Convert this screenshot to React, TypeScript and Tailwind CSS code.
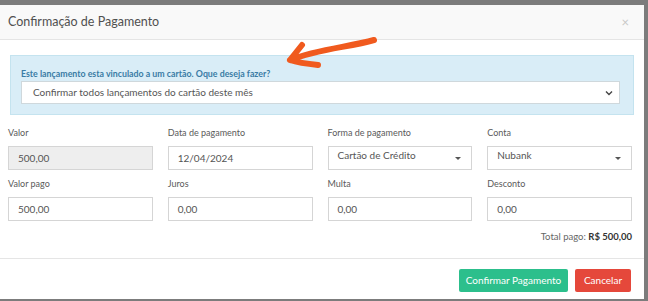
import React from "react";

const font = { fontFamily: "Lato, 'Open Sans', sans-serif" };

interface FieldProps {
  label: string;
  value: string;
  disabled?: boolean;
  select?: boolean;
}

const Field: React.FC<FieldProps> = ({ label, value, disabled, select }) => (
  <div className="flex flex-col">
    <label className="text-[9px] leading-[12px] text-[#5a5a5a] mb-[7px]">{label}</label>
    <div
      className={`h-[24px] border border-[#d5d5d5] flex items-center pl-[9px] pr-[10px] text-[10px] text-[#555] ${
        disabled ? "bg-[#eeeeee]" : "bg-white"
      }`}
    >
      <span className={`flex-1 ${select ? "-mt-[5px]" : ""}`}>{value}</span>
      {select && (
        <span className="w-0 h-0 border-l-[3px] border-r-[3px] border-t-[3px] border-l-transparent border-r-transparent border-t-[#555]" />
      )}
    </div>
  </div>
);

export default function App() {
  return (
    <div className="w-[648px] h-[301px] bg-[#7c7c7c] pt-[5px] pr-[4px] pb-[2px] relative overflow-hidden" style={font}>
      <div className="bg-white h-full flex flex-col">
        <div className="h-[35px] bg-[#f9f9f9] border-b border-[#e5e5e5] flex items-center justify-between pl-[8px] pr-[15px]">
          <span className="text-[12.5px] text-[#505050]">Confirmação de Pagamento</span>
          <span className="text-[13px] text-[#c8c8c8] leading-none">×</span>
        </div>
        <div className="px-[8px] pt-[15px]">
          <div className="mx-[2px] bg-[#d9edf7] border border-[#c4e3ef] pl-[10px] pr-[13px] pt-[12px] pb-[10px]">
            <div className="text-[8.8px] leading-[12px] font-bold text-[#3a7ca5] mb-[1px]">
              Este lançamento esta vinculado a um cartão. Oque deseja fazer?
            </div>
            <div className="h-[23px] bg-white border border-[#cfd8dc] flex items-center pl-[11px] pr-[6px] text-[10px] text-[#555]">
              <span className="flex-1">Confirmar todos lançamentos do cartão deste mês</span>
              <svg width="8" height="6" viewBox="0 0 8 6" fill="none">
                <path d="M1 1.5 L4 4.5 L7 1.5" stroke="#444" strokeWidth="1.4" />
              </svg>
            </div>
          </div>
          <div className="grid grid-cols-4 gap-x-[15px] gap-y-[8px] mt-[12px] pr-[4px]">
            <Field label="Valor" value="500,00" disabled />
            <Field label="Data de pagamento" value="12/04/2024" />
            <Field label="Forma de pagamento" value="Cartão de Crédito" select />
            <Field label="Conta" value="Nubank" select />
            <Field label="Valor pago" value="500,00" />
            <Field label="Juros" value="0,00" />
            <Field label="Multa" value="0,00" />
            <Field label="Desconto" value="0,00" />
          </div>
          <div className="text-right text-[9.5px] text-[#666] mt-[9px] pr-[4px] pb-[14px]">
            Total pago: <span className="font-bold text-[#333]">R$ 500,00</span>
          </div>
        </div>
        <div className="border-t border-[#e5e5e5] flex justify-end gap-[7px] pt-[10px] pr-[13px]">
          <button className="h-[23px] w-[109px] bg-[#2cbf8c] text-white text-[10px] rounded-[2px]">
            Confirmar Pagamento
          </button>
          <button className="h-[23px] w-[56px] bg-[#e5483b] text-white text-[10px] rounded-[2px]">
            Cancelar
          </button>
        </div>
      </div>
      <svg className="absolute left-0 top-0 pointer-events-none" width="648" height="301" viewBox="0 0 648 301" fill="none">
        <path
          d="M374 40 C 350 47, 318 49, 290 60 M 290 60 L 302 45 M 290 60 C 299 63, 308 64, 318 65"
          stroke="#f05a1e"
          strokeWidth="6"
          strokeLinecap="round"
          strokeLinejoin="round"
        />
      </svg>
    </div>
  );
}
